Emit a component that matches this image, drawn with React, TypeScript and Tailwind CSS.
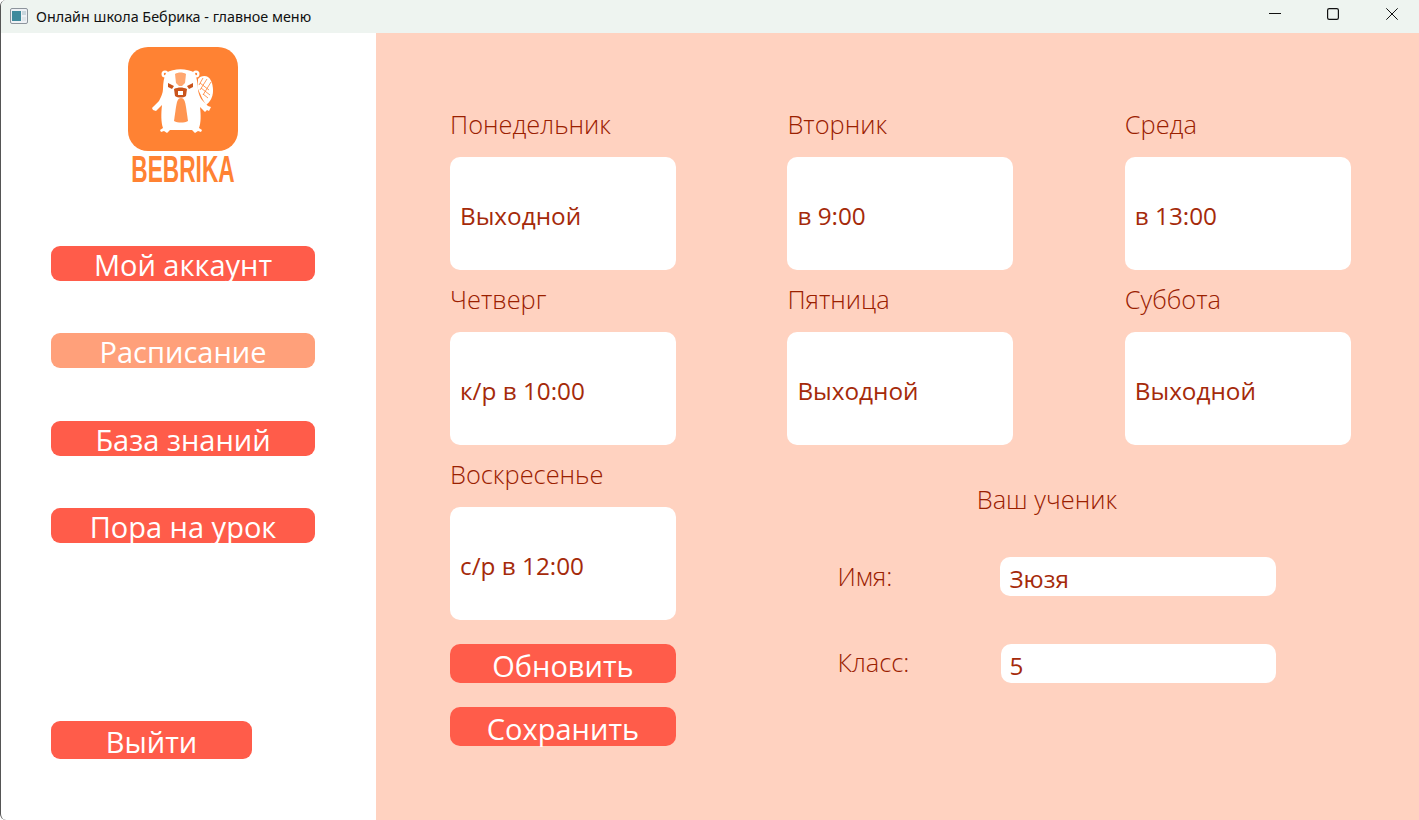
const days = [
  { name: "Понедельник", value: "Выходной" },
  { name: "Вторник", value: "в 9:00" },
  { name: "Среда", value: "в 13:00" },
  { name: "Четверг", value: "к/р в 10:00" },
  { name: "Пятница", value: "Выходной" },
  { name: "Суббота", value: "Выходной" },
];

function BeaverLogo() {
  return (
    <svg viewBox="0 0 110 104" className="h-[104px] w-[110px]">
      <rect width="110" height="104" rx="20" fill="#ff8233" />
      {/* tail */}
      <path d="M70 32c2-3 7-4 10-2 4 3 5 9 5 14 0 6-3 11-7 14l-4-7-4-9z" fill="#fff" />
      <path d="M72 36l9 7M73 41l9 7M75 47l5 4M79 32l-7 11M83 35l-8 13M75 31l-4 7" stroke="#ff8233" strokeWidth="0.8" fill="none" />
      {/* ears */}
      <circle cx="37" cy="27" r="3.5" fill="#fff" />
      <circle cx="68" cy="27" r="3.5" fill="#fff" />
      <circle cx="37" cy="27" r="1.2" fill="#ff8233" />
      <circle cx="68" cy="27" r="1.2" fill="#ff8233" />
      {/* body */}
      <path d="M38 26C46 21 59 21 67 26C69 32 70 38 70 43C71 48 72 50 74 53L80 59L83 60L82 62L81 64L79 63L77 65L74 62L72 60C73 68 73 76 71 81L74 83L73 85L70 84L67 86L64 83L42 83L39 86L36 84L33 85L32 83L35 81C33 75 33 67 34 58L30 62L28 64L25 63L24 61L26 59L31 54C33 50 35 46 35 42C35 36 36 30 38 26Z" fill="#fff" />
      {/* head markings */}
      <path d="M47 27c3-2 8-2 11 0l-1 9-3 3h-3l-3-3z" fill="#ff8233" opacity="0.7" />
      <path d="M40 36l6 3-2 3-4-2zM65 36l-6 3 2 3 4-2z" fill="#c9541c" />
      <path d="M46 42c4-2 9-2 13 0l-1 7c-3 2-8 2-11 0z" fill="#c9541c" />
      <rect x="50" y="44" width="5" height="4" fill="#fff" />
      {/* belly */}
      <path d="M53 51c3 0 4 3 5 9l2 14c-4 2-10 2-14 0l2-14c1-6 2-9 5-9z" fill="#ff8233" opacity="0.85" />
    </svg>
  );
}

function NavButton({ label, muted }: { label: string; muted?: boolean }) {
  return (
    <button
      className={`h-[35px] w-[264px] rounded-[9px] text-center text-[29px] leading-[38px] text-white ${
        muted ? "bg-[#ffa07a]" : "bg-[#ff5c4a]"
      }`}
    >
      {label}
    </button>
  );
}

function DayCard({ name, value }: { name: string; value: string }) {
  return (
    <div className="w-[226px]">
      <div className="h-[35px] text-[25.4px] font-light leading-[33px] text-[#9a2000]">{name}</div>
      <div className="mt-[14px] flex h-[113px] items-center rounded-[10px] bg-white pl-[10px] pt-[5px] text-[24.3px] text-[#a52a0a]">
        {value}
      </div>
    </div>
  );
}

function StudentRow({ label, value, second }: { label: string; value: string; second?: boolean }) {
  return (
    <div className="flex h-[39px] items-center">
      <div className={`w-[163px] text-[25.4px] font-light leading-[33px] text-[#9a2000] ${second ? "mb-[3px]" : "mb-[1px]"}`}>
        {label}
      </div>
      <div
        className={`flex h-[39px] items-center rounded-[10px] bg-white pt-[6px] text-[24.3px] text-[#a52a0a] ${
          second ? "ml-[1px] w-[275px] pl-[8px]" : "w-[276px] pl-[9px]"
        }`}
      >
        {value}
      </div>
    </div>
  );
}

export default function App() {
  return (
    <div className="flex h-[820px] w-[1419px] flex-col overflow-hidden rounded-l-[6px] border-l border-[#555] bg-white font-['Open_Sans','Noto_Sans',sans-serif]">
      <header className="flex h-[33px] shrink-0 items-center justify-between bg-[#eef4f0] pl-[9px] pr-[21px]">
        <div className="flex items-center gap-[8px]">
          <svg viewBox="0 0 18 16" className="h-[16px] w-[18px]">
            <rect x="0.5" y="0.5" width="17" height="15" rx="1.5" fill="#eef1f5" stroke="#8d949c" />
            <rect x="2" y="3" width="9" height="10" fill="#3f8a9c" />
            <rect x="12" y="3" width="4" height="4" fill="#c9d6dd" />
            <rect x="12" y="9" width="4" height="4" fill="#dfe6ea" />
          </svg>
          <span className="font-['Noto_Sans',sans-serif] text-[14.35px] text-[#111]">Онлайн школа Бебрика - главное меню</span>
        </div>
        <div className="flex items-center pb-[5px]">
          <svg viewBox="0 0 12 12" className="h-[12px] w-[12px]">
            <path d="M0 5.5H12" stroke="#111" strokeWidth="1" />
          </svg>
          <svg viewBox="0 0 12 12" className="ml-[46px] h-[12px] w-[12px]">
            <rect x="0.6" y="0.6" width="10.8" height="10.8" rx="1.6" fill="none" stroke="#111" strokeWidth="1.2" />
          </svg>
          <svg viewBox="0 0 12 12" className="ml-[47px] h-[12px] w-[12px]">
            <path d="M0.3 0.3L11.7 11.7M11.7 0.3L0.3 11.7" stroke="#111" strokeWidth="1" />
          </svg>
        </div>
      </header>

      <div className="flex min-h-0 flex-1">
        <aside className="flex w-[375px] shrink-0 flex-col pl-[50px] pt-[14px]">
          <div className="flex w-[264px] flex-col items-center">
            <BeaverLogo />
            <div className="mt-[2px] h-[33px] origin-center scale-x-[0.63] whitespace-nowrap font-['Liberation_Sans',sans-serif] text-[36px] font-bold leading-[33px] text-[#ff8233]">
              BEBRIKA
            </div>
          </div>
          <nav className="mt-[59.5px] flex flex-col gap-[52.5px]">
            <NavButton label="Мой аккаунт" />
            <NavButton label="Расписание" muted />
            <NavButton label="База знаний" />
            <NavButton label="Пора на урок" />
          </nav>
          <button className="mt-[177.5px] h-[38px] w-[201px] rounded-[9px] bg-[#ff5c4a] text-[29px] leading-[41px] text-white">
            Выйти
          </button>
        </aside>

        <main className="flex-1 bg-[#ffd2c0] pl-[74px] pt-[75px]">
          <div className="grid grid-cols-[226px_226px_226px] gap-x-[111.4px] gap-y-[13px]">
            {days.map((d) => (
              <DayCard key={d.name} name={d.name} value={d.value} />
            ))}
            <div className="w-[226px]">
              <DayCard name="Воскресенье" value="с/р в 12:00" />
              <div className="mt-[24px] flex flex-col gap-[24px]">
                <button className="h-[39px] rounded-[10px] bg-[#ff5c4a] text-[29px] leading-[44px] text-white">Обновить</button>
                <button className="h-[39px] rounded-[10px] bg-[#ff5c4a] text-[29px] leading-[44px] text-white">Сохранить</button>
              </div>
            </div>
            <div className="col-span-2 pl-[50px] pt-[24px]">
              <div className="w-[419px] text-center text-[25.4px] font-light leading-[35px] text-[#9a2000]">Ваш ученик</div>
              <div className="mt-[40px] flex flex-col gap-[48px]">
                <StudentRow label="Имя:" value="Зюзя" />
                <StudentRow label="Класс:" value="5" second />
              </div>
            </div>
          </div>
        </main>
      </div>
    </div>
  );
}
